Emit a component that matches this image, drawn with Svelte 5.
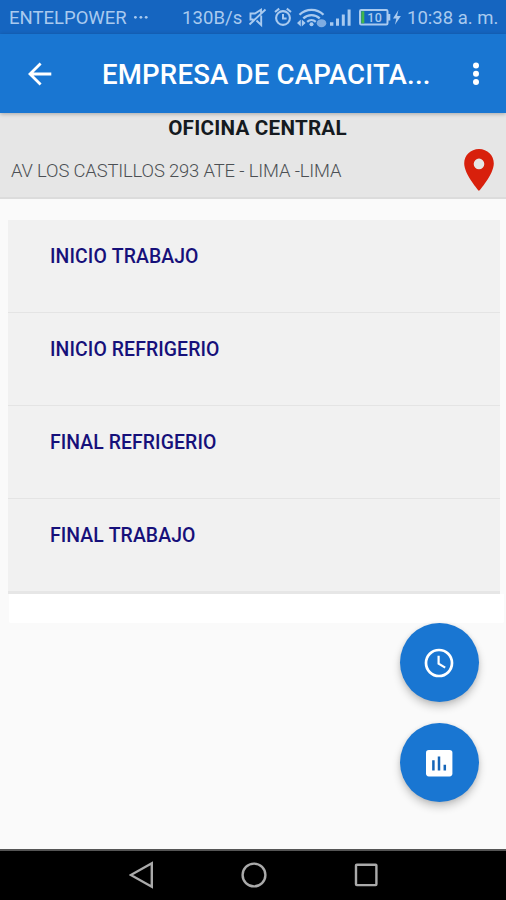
<script>
  const entries = ['INICIO TRABAJO', 'INICIO REFRIGERIO', 'FINAL REFRIGERIO', 'FINAL TRABAJO'];
</script>

<div class="screen">
  <header class="status">
    <span class="carrier">ENTELPOWER</span>
    <svg class="more" width="16" height="34" viewBox="0 0 16 34"><circle cx="2.4" cy="17.3" r="1.4" /><circle cx="7.9" cy="17.3" r="1.4" /><circle cx="13.2" cy="17.3" r="1.4" /></svg>
    <span class="rate">130B/s</span>
    <svg class="icons" width="160" height="34" viewBox="244 0 160 34">
      <g fill="none" stroke="#a9caef" stroke-width="1.9">
        <path d="M249.5 24.5 265.5 9.5M253.5 19.5h-3v-6h4.5l6-3.8v3M256.5 20.5l4.7 4.5v-9.5" />
        <circle cx="283" cy="18" r="6.9" stroke-width="2.1" />
        <path d="M283 14v4.5h3.6M275 12l4.2-3.4M291 12l-4.2-3.4" stroke-width="2" />
        <path d="M299.5 14.8a17 17 0 0 1 24 0M303.3 18.4a11.7 11.7 0 0 1 16.4 0M307.2 21.8a6.5 6.5 0 0 1 8.6 0" stroke-width="2.3" />
        <rect x="360" y="10" width="27.5" height="14.5" rx="1.2" stroke-width="2" />
      </g>
      <g fill="#a9caef">
        <circle cx="311.5" cy="24.2" r="2" />
        <path d="M300.8 19.5v7l-3.8-3.5zM301.8 19.5v7l3.8-3.5z" />
        <ellipse cx="321.5" cy="23.2" rx="4.8" ry="4" fill="#7eace2" />
        <path d="M330 22.3h3.4v3.4H330zM336 18.5h3v7.2h-3zM341.8 14.5h3v11.2h-3zM347.6 9.5h3v16.2h-3zM388 14h2.3v6.5H388zM398.4 10 393 18.4h3.4l-1.5 6.4 6-8.8h-3.8z" />
      </g>
      <path d="M361.3 11.3h3v12h-3z" fill="#42b64b" />
      <text x="367.3" y="21.7">10</text>
    </svg>
    <span class="time">10:38 a. m.</span>
  </header>
  <div class="appbar">
    <svg class="back" width="24" height="24" viewBox="0 0 24 24"><path d="M23.3 12H2M12.6 1.5 2 12l10.6 10.5" fill="none" stroke="#fff" stroke-width="2.8" /></svg>
    <h1>EMPRESA DE CAPACITA...</h1>
    <svg class="dots" width="8" height="24" viewBox="0 0 8 24" fill="#fff"><circle cx="4" cy="3.5" r="3" /><circle cx="4" cy="11.8" r="3" /><circle cx="4" cy="20" r="3" /></svg>
  </div>
  <section class="office">
    <h2>OFICINA CENTRAL</h2>
    <div class="place">
      <span class="address">AV LOS CASTILLOS 293 ATE - LIMA -LIMA</span>
      <svg width="30" height="42" viewBox="0 0 30 42"><path fill="#d8200c" fill-rule="evenodd" d="M15 0C6.6 0 .2 6.4.2 14.5.2 25.4 15 42 15 42s14.8-16.6 14.8-27.5C29.8 6.4 23.4 0 15 0zm0 9.6a5.3 5.3 0 1 1 0 10.6 5.3 5.3 0 0 1 0-10.6z" /></svg>
    </div>
  </section>
  <main>
    <ul>
      {#each entries as entry}
        <li><span>{entry}</span></li>
      {/each}
    </ul>
    <div class="blank"></div>
    <div class="actions">
      <button aria-label="Reloj">
        <svg width="30" height="30" viewBox="0 0 30 30" fill="none" stroke="#fff"><circle cx="15" cy="15" r="13" stroke-width="2.7" /><path d="M14.6 7.8v7.8l6.6 4" stroke-width="2.2" /></svg>
      </button>
      <button aria-label="Reporte">
        <svg width="30" height="30" viewBox="0 0 30 30"><rect x="2" y="2" width="26.4" height="26.4" rx="2.8" fill="#fff" /><path d="M9.4 12.2v10.4M15 8.5v14.1M20.8 16.8v5.8" stroke="#1565b8" stroke-width="2.5" /></svg>
      </button>
    </div>
  </main>
  <nav>
    <svg width="25" height="28" viewBox="0 0 25 28"><path d="M22.8 2.3v23.4L1.8 14z" /></svg>
    <svg width="26" height="28" viewBox="0 0 26 28"><circle cx="13" cy="14" r="11.4" /></svg>
    <svg width="26" height="28" viewBox="0 0 26 28"><rect x="3" y="3.7" width="20.4" height="20.4" rx=".8" /></svg>
  </nav>
</div>

<style>
  :global(body) { margin: 0; }
  .screen {
    width: 506px;
    height: 900px;
    display: flex;
    flex-direction: column;
    overflow: hidden;
    background: #fafafa;
    font-family: Roboto, sans-serif;
  }
  .status {
    flex: none;
    height: 34px;
    display: flex;
    align-items: center;
    background: #1565c0;
    color: #a9caef;
    font-size: 18.5px;
    line-height: 34px;
    white-space: nowrap;
  }
  .status span { flex: none; padding-top: 1px; }
  .carrier { width: 124px; margin-left: 9px; }
  .more { fill: #a9caef; }
  .rate { width: 62px; margin-left: 33px; letter-spacing: .1px; }
  .icons text { font: 500 12.5px Roboto, sans-serif; fill: #a9caef; letter-spacing: .3px; }
  .time { margin-left: 3px; }
  .appbar {
    position: relative;
    flex: none;
    height: 79px;
    display: flex;
    align-items: center;
    background: #1976d2;
    box-shadow: 0 1px 4px rgba(0, 0, 0, .28);
  }
  .back { margin-left: 28px; }
  h1 {
    width: 369px;
    margin: 3px 0 0 50px;
    color: #fff;
    font-size: 27.6px;
    font-weight: 500;
    letter-spacing: .17px;
    line-height: 34px;
    white-space: nowrap;
  }
  .dots { margin-left: 1px; }
  .office {
    flex: none;
    box-sizing: border-box;
    height: 86px;
    background: #e6e6e6;
    border-bottom: 2px solid #dcdcdc;
  }
  h2 {
    margin: 0;
    padding: 3px 0 0 9px;
    color: #151a20;
    font-size: 20.6px;
    font-weight: 700;
    letter-spacing: .25px;
    line-height: 24px;
    text-align: center;
    white-space: nowrap;
  }
  .place {
    display: flex;
    justify-content: space-between;
    padding: 9px 12px 0 11px;
  }
  .address {
    color: #4c5054;
    font-size: 18.4px;
    letter-spacing: -.14px;
    font-weight: 300;
    line-height: 44px;
    height: 42px;
    white-space: nowrap;
  }
  main { flex: 1; padding-top: 21px; }
  ul { list-style: none; margin: 0 6px 0 8px; padding: 0; }
  li {
    box-sizing: border-box;
    height: 93px;
    padding: 25px 0 0 42px;
    background: #f1f1f1;
    border-bottom: 1px solid #e4e4e4;
    color: #16107a;
    font-size: 19.4px;
    font-weight: 500;
    font-kerning: none;
    letter-spacing: .1px;
    line-height: 24px;
    white-space: nowrap;
  }
  li:last-child { height: 95px; border-bottom: 3px solid #e6e6e6; }
  .blank { height: 29px; margin: 0 2px 0 9px; background: #fff; border-radius: 0 0 2px 2px; }
  .actions {
    display: flex;
    flex-direction: column;
    align-items: flex-end;
    gap: 21px;
    padding: 0 27px 0 0;
  }
  button {
    display: flex;
    align-items: center;
    justify-content: center;
    width: 79px;
    height: 79px;
    padding: 0 1px 0 0;
    border: 0;
    border-radius: 50%;
    background: #1976d2;
    box-shadow: 0 5px 8px rgba(0, 0, 0, .2), 0 1px 4px rgba(0, 0, 0, .1);
  }
  nav {
    flex: none;
    box-sizing: border-box;
    height: 51px;
    display: flex;
    align-items: flex-start;
    padding: 10px 127px 0 129px;
    justify-content: space-between;
    background: #000;
    border-top: 2px solid #555;
  }
  nav svg { fill: none; stroke: #aaa; stroke-width: 2.4; }
</style>
